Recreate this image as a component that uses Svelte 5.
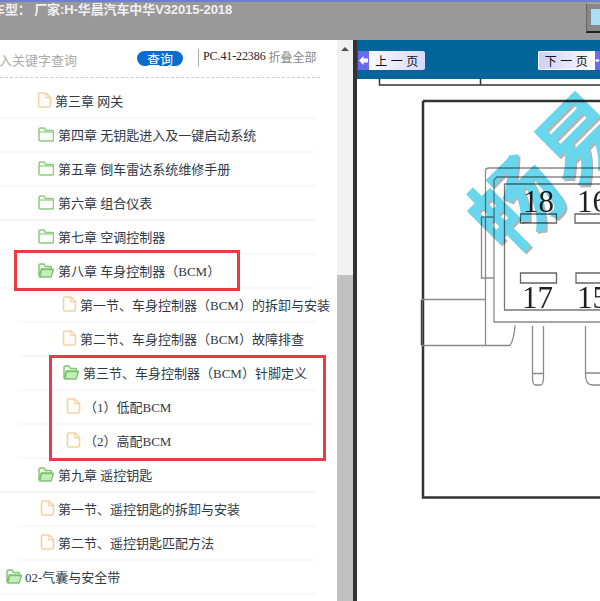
<script>
	const rows = [
		{ level: 'chapter', icon: 'file', text: '第三章 网关' },
		{ level: 'chapter', icon: 'folder', text: '第四章 无钥匙进入及一键启动系统' },
		{ level: 'chapter', icon: 'folder', text: '第五章 倒车雷达系统维修手册' },
		{ level: 'chapter', icon: 'folder', text: '第六章 组合仪表' },
		{ level: 'chapter', icon: 'folder', text: '第七章 空调控制器' },
		{ level: 'chapter', icon: 'open', text: '第八章 车身控制器（BCM）' },
		{ level: 'section', icon: 'file', text: '第一节、车身控制器（BCM）的拆卸与安装' },
		{ level: 'section', icon: 'file', text: '第二节、车身控制器（BCM）故障排查' },
		{ level: 'section', icon: 'open', text: '第三节、车身控制器（BCM）针脚定义' },
		{ level: 'sub', icon: 'file', text: '（1）低配BCM' },
		{ level: 'sub', icon: 'file', text: '（2）高配BCM' },
		{ level: 'chapter', icon: 'open', text: '第九章 遥控钥匙' },
		{ level: 'near', icon: 'file', text: '第一节、遥控钥匙的拆卸与安装' },
		{ level: 'near', icon: 'file', text: '第二节、遥控钥匙匹配方法' },
		{ level: 'top', icon: 'open', text: '02-气囊与安全带' }
	];
</script>

{#snippet treeIcon(kind)}
	{#if kind === 'file'}
		<svg class="icon doc" width="15" height="16" viewBox="0 0 15 16">
			<path d="M1.5 2.5q0-1.5 1.5-1.5h6l4.5 4.5v8q0 1.5-1.5 1.5h-9q-1.5 0-1.5-1.5z" fill="#fffdf9" stroke="#f3d2a8" stroke-width="1.6" />
			<path d="M8.8 1.2v4.4h4.5" fill="none" stroke="#f3d2a8" stroke-width="1.2" />
		</svg>
	{:else if kind === 'folder'}
		<svg class="icon dir" width="16" height="15" viewBox="0 0 16 15">
			<path d="M1 2.5q0-1.5 1.5-1.5h3.5l1.500 2.500h7q1 0 1 1v8q0 1.500-1.500 1.500h-11.500q-1.500 0-1.500-1.500z" fill="#fbfef9" stroke="#8ccc80" stroke-width="1.500" />
			<path d="M1 5h14.500" stroke="#8ccc80" stroke-width="1.200" />
		</svg>
	{:else}
		<svg class="icon dir" width="16" height="15" viewBox="0 0 16 15">
			<path d="M1 2.500q0-1.500 1.500-1.500h3.500l1.500 2.500h5q1 0 1 1v1.500h-10l-2.500 7.500z" fill="#eef9ea" stroke="#7cc56f" stroke-width="1.400" />
			<path d="M3.500 6.500h12l-2.500 7.500h-11z" fill="#c7ebbd" stroke="#7cc56f" stroke-width="1.400" />
		</svg>
	{/if}
{/snippet}

<div class="app">
	<header class="topbar">
		<div class="crumb">车型： 厂家:H-华晨汽车中华V32015-2018</div>
		<div class="screen-btn"><span></span></div>
	</header>

	<main class="body">
		<aside class="sidebar">
			<div class="search">
				<span class="placeholder">请输入关键字查询</span>
				<button class="query">查询</button>
				<span class="sep"></span>
				<span class="code">PC.41-22386</span>
				<span class="collapse">折叠全部</span>
			</div>
			<ul class="tree">
				{#each rows as row}
					<li class="row {row.level}">
						{@render treeIcon(row.icon)}
						<span class="label">{row.text}</span>
					</li>
				{/each}
			</ul>
			<div class="mark mark-chapter"></div>
			<div class="mark mark-pins"></div>
		</aside>

		<div class="scrollbar">
			<span class="arrow"></span>
			<div class="thumb"></div>
		</div>

		<section class="viewer">
			<div class="pager">
				<button class="page-btn prev"><span class="tab">
					<svg width="11" height="11" viewBox="0 0 11 11"><path d="M1 5.500l4.500-4.500v2.500h4.500v4h-4.500v2.500z" fill="#fff" /></svg>
				</span><span class="page-label">上 一 页</span></button>
				<button class="page-btn next"><span class="page-label">下 一 页</span><span class="tab">
					<svg width="11" height="11" viewBox="0 0 11 11"><path d="M10 5.500l-4.500-4.500v2.500h-4.500v4h4.500v2.500z" fill="#fff" /></svg>
				</span></button>
			</div>
			<svg class="drawing" width="243" height="522" viewBox="357 79 243 522">
				<g fill="none" stroke="#333" stroke-width="1.500">
					<path d="M379.500 79v6H600M480.500 79v6" />
					<path d="M423 101H600M423 101V497.500H600" stroke-width="2.500" />
				</g>
				<g fill="none" stroke="#8a8a8a" stroke-width="1.300">
					<path d="M600 168H489q-3.500 0-3.500 3.500V345.500H422v-46h63.500" />
					<path d="M600 177H497l-3 3V322H600" />
					<path d="M600 184H504.500V310H600" stroke="#777" />
					<path d="M481.500 217H494M481.500 217V278H494" />
					<path d="M485.500 345.500H510q4-6 5-20" />
					<path d="M520.500 214h36v9h-36zM600 214h-25v9H600M520.500 273h36v10h-36zM600 273h-24v10H600" stroke="#666" />
					<path d="M532.500 326V377q0 8 3 8h5q3 0 3-8V326M532.500 373.500h11" />
					<path d="M585.500 326V374q0 11 7 11H600M585.500 373h14.500" />
				</g>
				<path d="M421.500 300v45" stroke="#444" stroke-width="1.500" />
				<g class="numerals" fill="#222">
					<text x="523" y="212">18</text>
					<text x="577" y="212">16</text>
					<text x="522" y="308">17</text>
					<text x="577" y="308">15</text>
				</g>
				<g class="watermark">
					<text x="0" y="0" transform="translate(510 260) rotate(-45)" class="wm-shadow">畅易</text>
					<text x="0" y="0" transform="translate(508 258) rotate(-45)" class="wm-face">畅易</text>
				</g>
			</svg>
		</section>
	</main>
</div>

<style>
	:global(body) {
		margin: 0;
	}

	.app {
		width: 600px;
		height: 601px;
		display: flex;
		flex-direction: column;
		overflow: hidden;
		background: #fff;
		font-family: 'Liberation Serif', 'Noto Sans CJK SC', serif;
	}

	.topbar {
		box-sizing: border-box;
		height: 40px;
		flex: none;
		display: flex;
		justify-content: space-between;
		align-items: flex-start;
		border-top: 2px solid #6c80cf;
		background: #999;
	}

	.crumb {
		margin: -2px 0 0 -8px;
		font: 700 13px/20px 'Liberation Sans', 'Noto Sans CJK SC', sans-serif;
		color: #f0f0f0;
		letter-spacing: -0.100px;
		white-space: pre;
	}

	.screen-btn {
		box-sizing: border-box;
		width: 14px;
		height: 30px;
		margin-top: 1px;
		padding: 5px 0 6px 4px;
		background: #888;
		border-top: 1px solid #aaa;
		border-bottom: 2px solid #222;
		border-left: 1px solid #666;
	}

	.screen-btn span {
		display: block;
		height: 100%;
		background: #a9e0f6;
	}

	.body {
		flex: 1;
		min-height: 0;
		display: flex;
	}

	.sidebar {
		position: relative;
		width: 337px;
		flex: none;
		overflow: hidden;
	}

	.search {
		box-sizing: border-box;
		width: 320px;
		height: 38px;
		display: flex;
		align-items: center;
		border-bottom: 1px dashed #ccc;
		font-size: 12px;
	}

	.placeholder {
		flex: none;
		width: 164px;
		margin-left: -27px;
		padding-top: 1px;
		font-size: 13px;
		color: #aaa;
	}

	.query {
		width: 46px;
		height: 15px;
		flex: none;
		padding: 0;
		border: none;
		border-radius: 8px;
		background: #0a6ccc;
		color: #fff;
		font: 13px/15px 'Noto Sans CJK SC', sans-serif;
	}

	.sep {
		width: 1px;
		height: 18px;
		margin: -2px 4px 0 15px;
		background: #aaa;
	}

	.code {
		margin-top: -4px;
		color: #222;
		letter-spacing: -0.100px;
	}

	.collapse {
		margin: -4px 0 0 3px;
		color: #888;
		white-space: nowrap;
	}

	.tree {
		list-style: none;
		margin: 7px 0 0;
		padding: 0;
		width: 316px;
	}

	.row {
		box-sizing: border-box;
		height: 34px;
		display: flex;
		align-items: center;
		gap: 4px;
		padding-bottom: 2px;
		border-bottom: 2px solid #f7f8f9;
		font-size: 13px;
		color: #2f3a48;
		white-space: nowrap;
	}

	.chapter { padding-left: 37px; }
	.section { margin-left: 19px; padding-left: 43px; }
	.sub { margin-left: 19px; padding-left: 47px; }
	.near { margin-left: 19px; padding-left: 21px; }
	.top { padding-left: 5px; gap: 3px; }

	.icon {
		flex: none;
	}

	.icon.doc {
		margin-right: -1px;
	}

	.icon.dir {
		margin-left: 1px;
	}

	.mark {
		position: absolute;
		box-sizing: border-box;
		border: 3px solid #e63c42;
	}

	.mark-chapter {
		left: 14px;
		top: 210px;
		width: 226px;
		height: 41px;
	}

	.mark-pins {
		left: 49px;
		top: 315px;
		width: 277px;
		height: 106px;
	}

	.scrollbar {
		box-sizing: border-box;
		width: 16px;
		flex: none;
		display: flex;
		flex-direction: column;
		background: #f1f1f1;
	}

	.arrow {
		width: 0;
		height: 0;
		margin: 7px auto 0;
		border: 4px solid transparent;
		border-top: none;
		border-bottom: 4px solid #505050;
	}

	.thumb {
		height: 326px;
		margin-top: auto;
		background: #c1c1c1;
	}

	.viewer {
		flex: 1;
		min-width: 0;
		display: flex;
		flex-direction: column;
		border-left: 4px solid #333;
	}

	.pager {
		box-sizing: border-box;
		height: 39px;
		flex: none;
		display: flex;
		justify-content: space-between;
		align-items: flex-start;
		padding: 11px 0 0 1px;
		background: #006699;
		overflow: hidden;
	}

	.page-btn {
		height: 19px;
		display: flex;
		align-items: stretch;
		padding: 0;
		border: none;
		border-radius: 2px;
		background: linear-gradient(90deg, #fff, #d8d8fb);
		color: #111;
		font: 12px/19px 'Noto Sans CJK SC', sans-serif;
		letter-spacing: 0.400px;
	}

	.prev {
		width: 67px;
	}

	.next {
		width: 62px;
		box-shadow: inset 0 0 0 1px #fff;
		background: linear-gradient(90deg, #cfcff8, #fff);
	}

	.tab {
		width: 11px;
		flex: none;
		display: flex;
		align-items: center;
		justify-content: center;
		background: #6a6aec;
	}

	.next .tab {
		width: 5px;
		justify-content: flex-start;
	}

	.page-label {
		flex: 1;
		text-align: center;
		white-space: nowrap;
	}

	.drawing {
		display: block;
		flex: none;
		filter: blur(0.300px);
	}

	.numerals {
		font: 31px 'Liberation Serif', serif;
	}

	.watermark {
		font: 700 88px 'Noto Sans CJK SC', sans-serif;
		letter-spacing: 4px;
		mix-blend-mode: multiply;
		isolation: isolate;
	}

	.wm-shadow {
		fill: #b4b4b4;
	}

	.wm-face {
		fill: #68d6ec;
	}
</style>
